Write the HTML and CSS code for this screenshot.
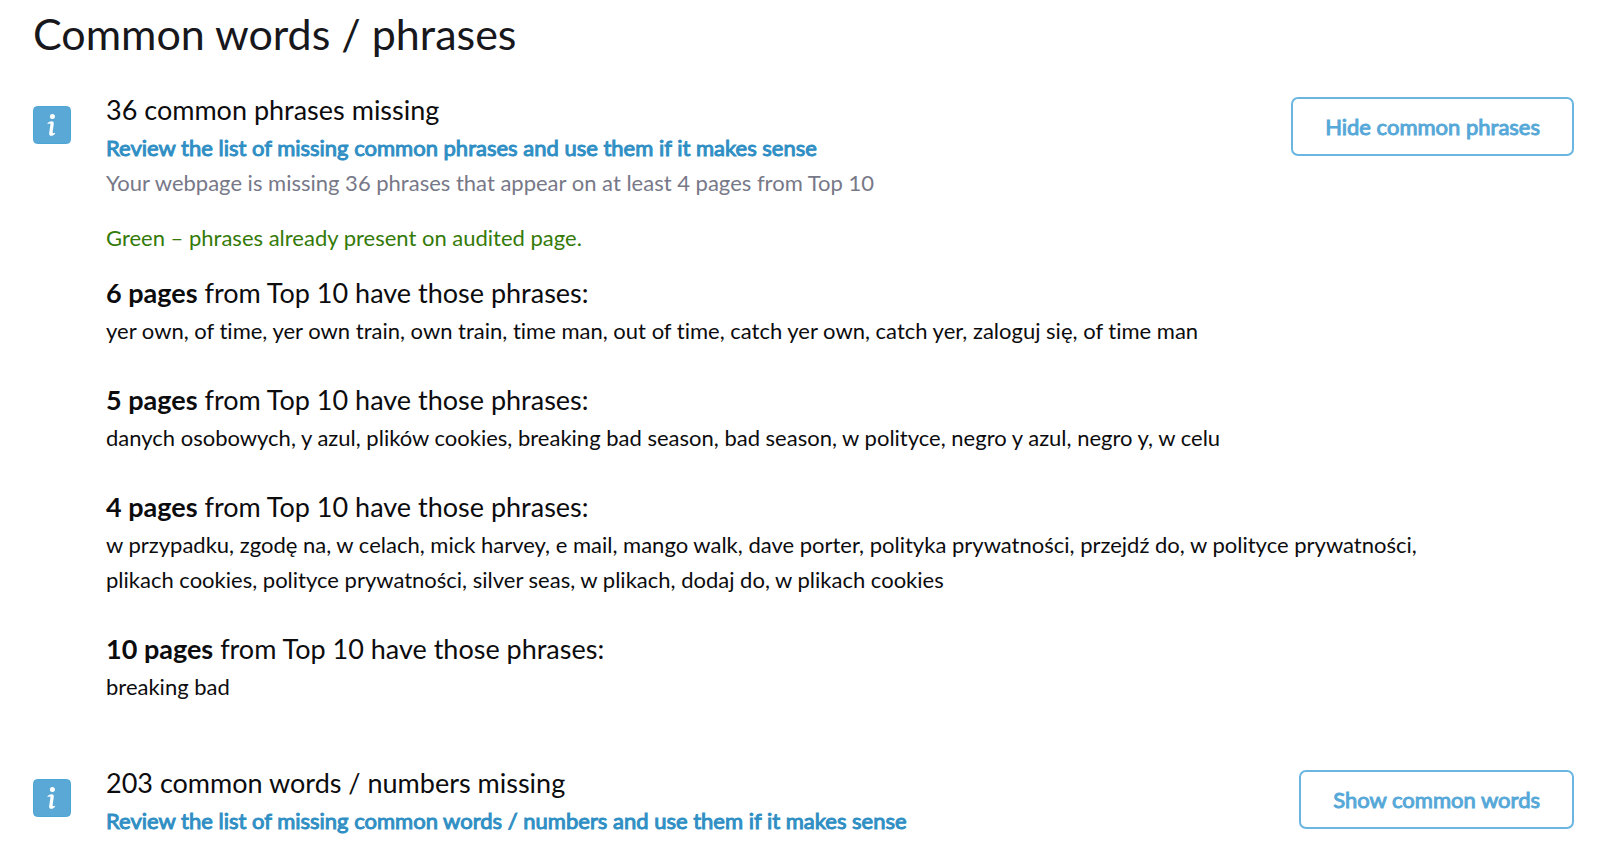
FILE: index.html
```html
<!DOCTYPE html>
<html lang="en">
<head>
<meta charset="utf-8">
<title>Common words / phrases</title>
<link rel="stylesheet" href="styles.css">
</head>
<body>
<main class="audit">
  <h1 class="audit-title">Common words / phrases</h1>

  <section class="check">
    <svg class="check-icon" viewBox="0 0 38 38" role="img" aria-label="Info"><rect x=".5" y=".5" width="37" height="37" rx="4" fill="#5aa8d6" stroke="#4ba6d6"/><circle cx="19.400" cy="10.500" r="2.500" fill="#fff"/><path d="M14.300 17.400c1.400-1.400 3-2.200 4.500-2.200 1.700 0 2.200 1.200 1.900 3l-1 7.500c-.2 1.300.1 1.700.9 1.500l1.300-.5.3.8c-1.200 1.600-2.600 2.300-3.900 2.300-1.700 0-2.400-1.200-2.100-3.100l1.200-7.900c.1-1-.1-1.400-.8-1.300l-1.900.6z" fill="#fff"/></svg>
    <div class="check-body">
      <h2 class="check-title">36 common phrases missing</h2>
      <a class="check-link" href="#phrases">Review the list of missing common phrases and use them if it makes sense</a>
      <p class="check-note">Your webpage is missing 36 phrases that appear on at least 4 pages from Top 10</p>
      <div id="phrases">
        <p class="legend">Green – phrases already present on audited page.</p>
        <section class="group">
          <h3 class="group-title"><strong>6 pages</strong> from Top 10 have those phrases:</h3>
          <p class="phrases">yer own, of time, yer own train, own train, time man, out of time, catch yer own, catch yer, zaloguj się, of time man</p>
        </section>
        <section class="group">
          <h3 class="group-title"><strong>5 pages</strong> from Top 10 have those phrases:</h3>
          <p class="phrases">danych osobowych, y azul, plików cookies, breaking bad season, bad season, w polityce, negro y azul, negro y, w celu</p>
        </section>
        <section class="group">
          <h3 class="group-title"><strong>4 pages</strong> from Top 10 have those phrases:</h3>
          <p class="phrases">w przypadku, zgodę na, w celach, mick harvey, e mail, mango walk, dave porter, polityka prywatności, przejdź do, w polityce prywatności, plikach cookies, polityce prywatności, silver seas, w plikach, dodaj do, w plikach cookies</p>
        </section>
        <section class="group">
          <h3 class="group-title"><strong>10 pages</strong> from Top 10 have those phrases:</h3>
          <p class="phrases">breaking bad</p>
        </section>
      </div>
    </div>
    <button class="toggle" type="button">Hide common phrases</button>
  </section>

  <section class="check">
    <svg class="check-icon" viewBox="0 0 38 38" role="img" aria-label="Info"><rect x=".5" y=".5" width="37" height="37" rx="4" fill="#5aa8d6" stroke="#4ba6d6"/><circle cx="19.400" cy="10.500" r="2.500" fill="#fff"/><path d="M14.300 17.400c1.400-1.400 3-2.200 4.500-2.200 1.700 0 2.200 1.200 1.900 3l-1 7.500c-.2 1.300.1 1.700.9 1.500l1.300-.5.3.8c-1.200 1.600-2.600 2.300-3.900 2.300-1.700 0-2.400-1.200-2.100-3.100l1.200-7.900c.1-1-.1-1.400-.8-1.300l-1.900.6z" fill="#fff"/></svg>
    <div class="check-body">
      <h2 class="check-title">203 common words / numbers missing</h2>
      <a class="check-link" href="#words">Review the list of missing common words / numbers and use them if it makes sense</a>
    </div>
    <button class="toggle" type="button">Show common words</button>
  </section>
</main>
</body>
</html>
```

FILE: styles.css
```css
* {
  box-sizing: border-box;
}

body {
  margin: 0;
  background: #fff;
  color: #0c0c0e;
  font-family: Lato, "Liberation Sans", sans-serif;
  font-size: 22px;
  font-variant-ligatures: none;
  line-height: 35px;
}

h1, h2, h3, p {
  margin: 0;
  font-weight: 400;
}

.audit {
  padding: 5px 26px 0 33px;
}

.audit-title {
  color: #17171c;
  font-size: 43px;
  line-height: 57px;
}

.check {
  display: grid;
  grid-template-columns: 38px minmax(0, 1fr) auto;
  align-items: start;
  margin-top: 27px;
}

.check-icon {
  width: 38px;
  height: 38px;
  margin-top: 17px;
}

.check-body {
  grid-row: 1;
  grid-column: 2 / 4;
  padding: 0 130px 0 35px;
}

.check-title,
.group-title {
  font-size: 27px;
  line-height: 41px;
}

.check-link {
  display: block;
  color: #2f8fc4;
  text-decoration: none;
  -webkit-text-stroke: 1px;
}

.check-note {
  color: #777888;
}

.legend {
  margin: 20px 0 17px;
  color: #347a08;
}

.group {
  margin-bottom: 31px;
}

.toggle {
  grid-row: 1;
  grid-column: 3;
  margin-top: 8px;
  padding: 10px 32px;
  border: 2px solid #6ab6e0;
  border-radius: 7px;
  background: #fff;
  color: #56a8d8;
  font: inherit;
  -webkit-text-stroke: 1px;
}
```
